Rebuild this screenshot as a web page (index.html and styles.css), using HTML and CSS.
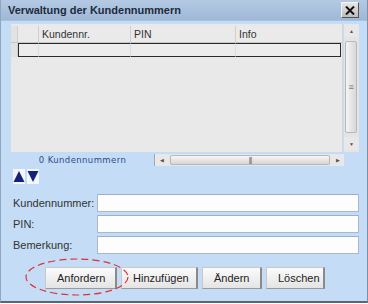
FILE: index.html
```html
<!DOCTYPE html>
<html lang="de">
<head>
	<meta charset="UTF-8">
	<title>Verwaltung der Kundennummern</title>
	<link rel="stylesheet" href="styles.css">
</head>
<body>
<div class="win">
    <div class="titlebar">
        <span class="title">Verwaltung der Kundennummern</span>
        <a href="javascript:;" class="close">
            <svg width="10" height="9" viewBox="0 0 10 9"><path d="M1 0.5 L9 8.5 M9 0.5 L1 8.5" stroke="#111" stroke-width="2"/></svg>
        </a>
    </div>
    <div class="content">
        <div class="grid">
            <div class="table">
                <div class="row head">
                    <div class="c c0"></div>
                    <div class="c c1"></div>
                    <div class="c c2">Kundennr.</div>
                    <div class="c c3">PIN</div>
                    <div class="c c4">Info</div>
                </div>
                <div class="row sel">
                    <div class="c c0"></div>
                    <div class="c c1 in"></div>
                    <div class="c c2 in"></div>
                    <div class="c c3 in"></div>
                    <div class="c c4 in"></div>
                </div>
            </div>
            <div class="vscroll">
                <div class="sbtn">&#9650;</div>
                <div class="vthumb"><span class="grip">&#8801;</span></div>
                <div class="sbtn">&#9660;</div>
            </div>
        </div>
        <div class="bottom">
            <div class="status">0 Kundennummern</div>
            <div class="hscroll">
                <div class="sbtn h">&#9664;</div>
                <div class="hthumb"><span class="hgrip">|||</span></div>
                <div class="sbtn h">&#9654;</div>
            </div>
        </div>
        <div class="moves">
            <a href="javascript:;" class="move"><svg width="12" height="13" viewBox="0 0 12 13"><path d="M6 1 L11.5 12 L0.5 12 Z" fill="#14237a"/></svg></a>
            <a href="javascript:;" class="move"><svg width="12" height="13" viewBox="0 0 12 13"><path d="M0.5 1 L11.5 1 L6 12 Z" fill="#14237a"/></svg></a>
        </div>
        <div class="form">
            <label class="field"><span>Kundennummer:</span><input type="text"></label>
            <label class="field"><span>PIN:</span><input type="text"></label>
            <label class="field"><span>Bemerkung:</span><input type="text"></label>
        </div>
        <div class="buttons">
            <button>Anfordern</button>
            <button>Hinzufügen</button>
            <button>Ändern</button>
            <button>Löschen</button>
        </div>
    </div>
    <svg class="mark" width="106" height="40" viewBox="0 0 106 40"><ellipse cx="53" cy="20" rx="51" ry="18" fill="none" stroke="#e0303a" stroke-width="1.2" stroke-dasharray="7 4"/></svg>
</div>
</body>
</html>
```
FILE: styles.css
```css
body{margin:0;padding:0;}
body,button,input{font:11px "Liberation Sans", Arial, sans-serif;color:#222;}
a{text-decoration:none}

.win{
    width:366px;
    height:301px;
    position:relative;
    background:#c4dcf5;
    border-left:1px solid #8fa6c2;
    border-right:1px solid #7d8fa6;
    border-bottom:2px solid #5d6670;
    overflow:hidden;
}
.titlebar{
    height:20px;
    display:flex;
    align-items:center;
    justify-content:space-between;
    padding:0 8px 0 7px;
    background:linear-gradient(#b4cae4,#9fb8d6);
    border-bottom:1px solid #a9c0da;
}
.title{
    font-weight:bold;
    font-size:11px;
    color:#1d2b3d;
}
.close{
    width:16px;
    height:14px;
    display:flex;
    align-items:center;
    justify-content:center;
    background:linear-gradient(#e6e6e6,#bdbdbd);
    border:1px solid #f4f4f4;
    border-right-color:#555;
    border-bottom-color:#555;
}
.content{
    padding:3px 8px 0 10px;
}
.grid{
    display:flex;
    height:128px;
}
.table{
    width:333px;
    background:#e9e9e9;
    border-right:1px solid #d6d6d6;
    padding-top:2px;
}
.row{
    display:flex;
    height:16px;
}
.row.head{
    border-bottom:1px solid #c6c6c6;
    background:#eaeaea;
}
.c{
    height:100%;
    box-sizing:border-box;
    border-right:1px solid #d0d0d0;
    padding-left:3px;
    line-height:16px;
    color:#333;
    font-size:10.5px;
}
.c0{width:7px;padding:0;background:#e2e2e2;}
.c1{width:21px;}
.c2{width:92px;}
.c3{width:105px;}
.c4{flex:1;border-right:none;}
.row.sel{
    height:14px;
}
.row.sel .c.in{
    border-top:1px solid #2a2a2a;
    border-bottom:1px solid #2a2a2a;
    border-right:1px solid #dcdcdc;
    background:#ececec;
}
.row.sel .c1.in{border-left:1px solid #2a2a2a;}
.row.sel .c4.in{border-right:1px solid #2a2a2a;margin-right:1px;}
.vscroll{
    width:15px;
    display:flex;
    flex-direction:column;
    background:#e4e4e4;
    margin-left:1px;
    padding:0 0 2px;
}
.sbtn{
    height:13px;
    font-size:5px;
    color:#555;
    display:flex;
    align-items:center;
    justify-content:center;
    background:#e8e8e8;
}
.vthumb{
    flex:1;
    margin:4px 2px 4px 1px;
    border:1px solid #b8b8b8;
    border-radius:2px;
    background:linear-gradient(90deg,#f4f4f4,#d8d8d8);
    display:flex;
    align-items:center;
    justify-content:center;
}
.grip{font-size:9px;color:#777;}
.bottom{
    display:flex;
    height:12px;
    margin-top:2px;
}
.status{
    width:143px;
    text-align:center;
    font:8.5px "DejaVu Sans", sans-serif;
    letter-spacing:0.4px;
    color:#2c4c8c;
    border-right:1px solid #9aa8b8;
    line-height:12px;
}
.hscroll{
    width:189px;
    display:flex;
    background:#e6e6e6;
}
.sbtn.h{width:13px;height:12px;}
.hthumb{
    flex:1;
    margin:1px 1px 1px 2px;
    border:1px solid #b8b8b8;
    border-radius:2px;
    background:linear-gradient(#f6f6f6,#d6d6d6);
    display:flex;
    align-items:center;
    justify-content:center;
}
.hgrip{font-size:7px;color:#666;letter-spacing:-1px;line-height:8px;}
.moves{
    display:flex;
    gap:2px;
    margin:3px 0 0 2px;
}
.move{
    width:12px;
    height:15px;
    display:flex;
    align-items:center;
    justify-content:center;
    background:#f2f5fa;
}
.form{
    display:flex;
    flex-direction:column;
    gap:3px;
    margin-top:10px;
}
.field{
    display:flex;
    align-items:center;
}
.field span{
    width:84px;
    padding-left:2px;
    color:#333;
}
.field input{
    width:256px;
    height:14px;
    padding:1px 2px;
    border:1px solid #a8b9cf;
    border-top-color:#9cb0c8;
    background:#fdfdfd;
}
.buttons{
    display:flex;
    gap:4px;
    margin:13px 0 0 34px;
}
.buttons button{
    height:22px;
    padding:0 11px;
    border:1px solid #c8c8c8;
    border-right:2px solid #8a8a8a;
    border-bottom:1px solid #9a9a9a;
    background:linear-gradient(#fbfbfb,#e4e4e4);
    color:#222;
}
.buttons button:first-child{width:72px;}
.buttons button:nth-child(2){width:77px;}
.buttons button:nth-child(3){width:60px;}
.buttons button:nth-child(4){width:59px;}
.mark{
    position:absolute;
    left:23px;
    top:257px;
}
```
